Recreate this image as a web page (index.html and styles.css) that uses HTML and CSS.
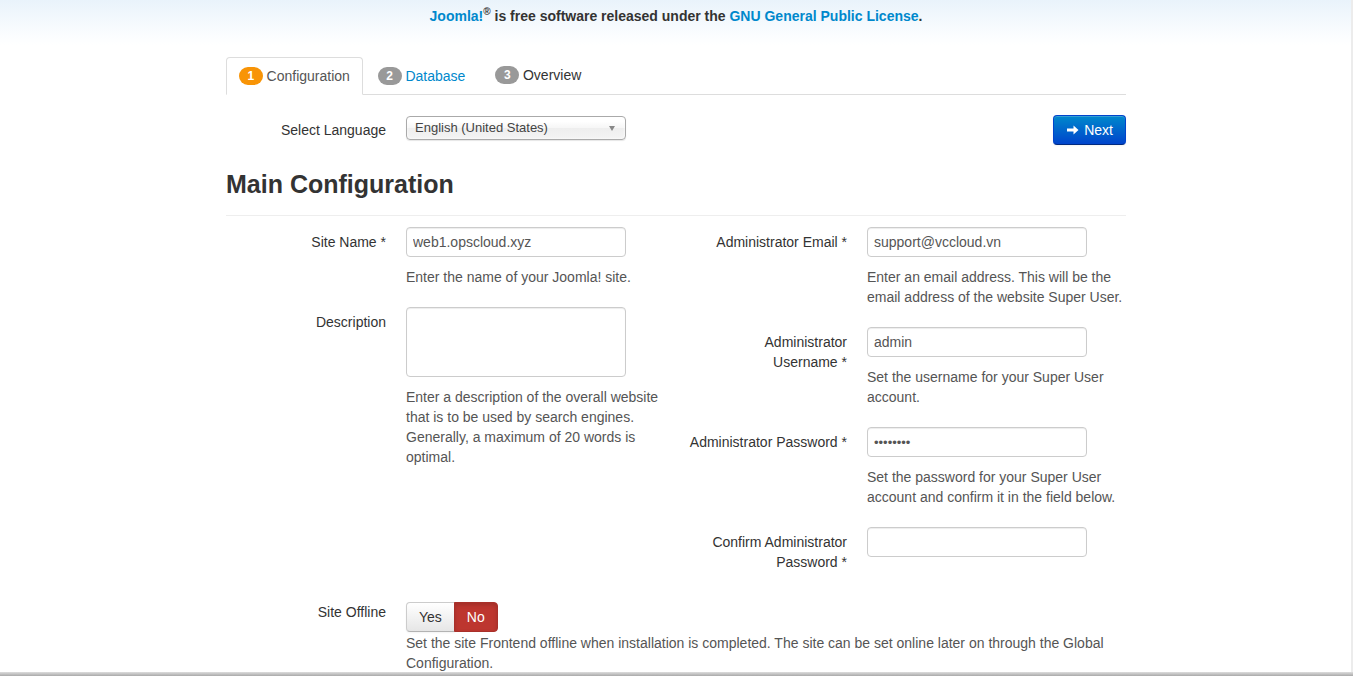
FILE: index.html
```html
<!DOCTYPE html>
<html lang="en">
<head>
  <meta charset="UTF-8">
  <meta name="viewport" content="width=device-width, initial-scale=1.0">
  <title>Joomla! Web Installer</title>
  <link rel="stylesheet" href="styles.css">
</head>
<body>

<div class="header">
  <p><a href="#">Joomla!</a><sup>&reg;</sup> is free software released under the <a href="#">GNU General Public License</a>.</p>
</div>

<div class="container">
  <ul class="nav-tabs">
    <li class="active"><a href="#"><span class="badge badge-warning">1</span> Configuration</a></li>
    <li><a href="#"><span class="badge">2</span> Database</a></li>
    <li class="last"><a href="#" class="plain"><span class="badge">3</span> Overview</a></li>
  </ul>

  <div class="lang-row">
    <label class="control-label">Select Language</label>
    <div class="chzn-single">
      <span>English (United States)</span>
      <b class="arrow"></b>
    </div>
    <button class="btn btn-primary">
      <svg class="icon" width="12" height="12" viewBox="0 0 12 12"><path d="M0 4.5h6.5V1.5L11.5 6 6.5 10.5V7.5H0z" fill="#fff"/></svg>
      Next
    </button>
  </div>

  <h3>Main Configuration</h3>
  <hr>

  <div class="row">
    <div class="span6">
      <div class="control-group">
        <label class="control-label">Site Name *</label>
        <div class="controls">
          <input type="text" value="web1.opscloud.xyz">
          <p class="help-block">Enter the name of your Joomla! site.</p>
        </div>
      </div>
      <div class="control-group">
        <label class="control-label">Description</label>
        <div class="controls">
          <textarea></textarea>
          <p class="help-block">Enter a description of the overall website that is to be used by search engines. Generally, a maximum of 20 words is optimal.</p>
        </div>
      </div>
    </div>

    <div class="span6">
      <div class="control-group">
        <label class="control-label">Administrator Email&nbsp;*</label>
        <div class="controls">
          <input type="text" value="support@vccloud.vn">
          <p class="help-block">Enter an email address. This will be the email address of the website Super User.</p>
        </div>
      </div>
      <div class="control-group">
        <label class="control-label">Administrator Username&nbsp;*</label>
        <div class="controls">
          <input type="text" value="admin">
          <p class="help-block">Set the username for your Super User account.</p>
        </div>
      </div>
      <div class="control-group">
        <label class="control-label">Administrator Password&nbsp;*</label>
        <div class="controls">
          <input type="password" value="password">
          <p class="help-block">Set the password for your Super User account and confirm it in the field below.</p>
        </div>
      </div>
      <div class="control-group">
        <label class="control-label">Confirm Administrator Password&nbsp;*</label>
        <div class="controls">
          <input type="password" value="">
        </div>
      </div>
    </div>
  </div>

  <div class="control-group offline">
    <label class="control-label">Site Offline</label>
    <div class="controls">
      <div class="btn-group">
        <button class="btn">Yes</button>
        <button class="btn btn-danger">No</button>
      </div>
      <p class="help-block tight">Set the site Frontend offline when installation is completed. The site can be set online later on through the Global Configuration.</p>
    </div>
  </div>
</div>

<div class="edge-right"></div>
<div class="edge-bottom"></div>

</body>
</html>
```

FILE: styles.css
```css
body {
  margin: 0;
  padding-right: 1px;
  font-family: 'Liberation Sans', Arial, sans-serif;
  font-size: 14px;
  line-height: 20px;
  color: #333;
  background-color: #fff;
}

a {
  color: #0088cc;
  text-decoration: none;
}

.header {
  height: 45px;
  background: linear-gradient(#e9f3fb, #fbfdff 80%, #fff);
  text-align: center;
}

.header p {
  margin: 0;
  padding-top: 6px;
  font-weight: bold;
}

.header sup {
  font-size: 10px;
  line-height: 0;
  vertical-align: 6px;
}

.container {
  width: 900px;
  margin: 12px auto 0;
}

/* tabs */
.nav-tabs {
  display: flex;
  list-style: none;
  margin: 0;
  padding: 0;
  border-bottom: 1px solid #ddd;
}

.nav-tabs li {
  margin-bottom: -1px;
}

.nav-tabs li.last {
  margin-left: 2px;
}

.nav-tabs a {
  display: block;
  padding: 8px 12px;
  margin-right: 2px;
  border: 1px solid transparent;
  border-radius: 4px 4px 0 0;
  color: #0088cc;
}

.nav-tabs .active a {
  color: #555;
  background-color: #fff;
  border-color: #ddd #ddd transparent;
}

.nav-tabs a.plain {
  color: #333;
  position: relative;
  top: -1px;
}

.badge {
  display: inline-block;
  padding: 2px 8.5px;
  font-size: 12px;
  font-weight: bold;
  line-height: 14px;
  color: #fff;
  background-color: #999;
  border-radius: 9px;
  vertical-align: 1px;
}

.badge-warning {
  background-color: #f89406;
}

/* language row */
.lang-row {
  display: flex;
  align-items: flex-start;
  margin-top: 20px;
}

.control-label {
  flex: 0 0 160px;
  width: 160px;
  padding-top: 5px;
  text-align: right;
}

.chzn-single {
  position: relative;
  box-sizing: border-box;
  width: 220px;
  height: 24px;
  margin: 1px 0 0 20px;
  padding: 0 0 0 8px;
  font-size: 13px;
  line-height: 22px;
  color: #444;
  border: 1px solid #aaa;
  border-radius: 4px;
  background: linear-gradient(#fff 20%, #f6f6f6 50%, #eee 52%, #f4f4f4);
  box-shadow: 0 0 3px #fff inset, 0 1px 1px rgba(0, 0, 0, 0.1);
}

.chzn-single .arrow {
  position: absolute;
  right: 10px;
  top: 9px;
  width: 0;
  height: 0;
  border-left: 3px solid transparent;
  border-right: 3px solid transparent;
  border-top: 5px solid #888;
}

.btn {
  display: inline-block;
  padding: 4px 12px;
  font-family: inherit;
  font-size: 14px;
  line-height: 20px;
  color: #333;
  background: linear-gradient(#fff, #e6e6e6);
  border: 1px solid #ccc;
  border-bottom-color: #b3b3b3;
  border-radius: 4px;
  box-shadow: inset 0 1px 0 rgba(255, 255, 255, 0.2), 0 1px 2px rgba(0, 0, 0, 0.05);
  cursor: pointer;
}

.btn-primary {
  margin-left: auto;
  padding: 4px 12px 4px 13px;
  color: #fff;
  background: linear-gradient(#0088cc, #0044cc);
  border-color: #04c #04c #002a80;
}

.btn-primary .icon {
  vertical-align: -1px;
  margin-right: 1px;
}

/* headings */
h3 {
  margin: 19px 0 0;
  font-size: 25px;
  line-height: 40px;
  font-weight: bold;
  color: #333;
}

hr {
  margin: 11px 0 11px;
  border: 0;
  border-top: 1px solid #eee;
}

/* form */
.row {
  display: flex;
  justify-content: space-between;
}

.span6 {
  width: 439px;
}

.control-group {
  display: flex;
  align-items: flex-start;
  margin-bottom: 20px;
}

.controls {
  margin-left: 20px;
  flex: 1;
}

input,
textarea {
  display: block;
  box-sizing: border-box;
  width: 220px;
  height: 30px;
  margin: 0;
  padding: 4px 6px;
  font-family: inherit;
  font-size: 14px;
  line-height: 20px;
  color: #555;
  background-color: #fff;
  border: 1px solid #ccc;
  border-radius: 4px;
  box-shadow: inset 0 1px 1px rgba(0, 0, 0, 0.075);
}

input[type="password"] {
  font-size: 13px;
  letter-spacing: 0;
}

textarea {
  height: 70px;
  resize: none;
}

.help-block {
  margin: 10px 0 0;
  color: #555;
}

.help-block.tight {
  margin-top: 1px;
}

.offline {
  margin-top: 10px;
}

.offline .control-label {
  padding-top: 0;
}

.btn-group {
  display: flex;
}

.btn-group .btn {
  border-radius: 0;
}

.btn-group .btn:first-child {
  border-radius: 4px 0 0 4px;
}

.btn-group .btn:last-child {
  margin-left: -1px;
  border-radius: 0 4px 4px 0;
}

.btn-danger {
  color: #fff;
  background: #bd362f;
  border-color: #a9302a;
  box-shadow: inset 0 2px 4px rgba(0, 0, 0, 0.15);
}

/* window edges */
.edge-right {
  position: fixed;
  top: 0;
  right: 0;
  bottom: 0;
  width: 2px;
  background-color: #ececec;
}

.edge-bottom {
  position: fixed;
  left: 0;
  right: 0;
  bottom: 0;
  height: 4px;
  background: linear-gradient(#ddd, #aaa);
}
```
